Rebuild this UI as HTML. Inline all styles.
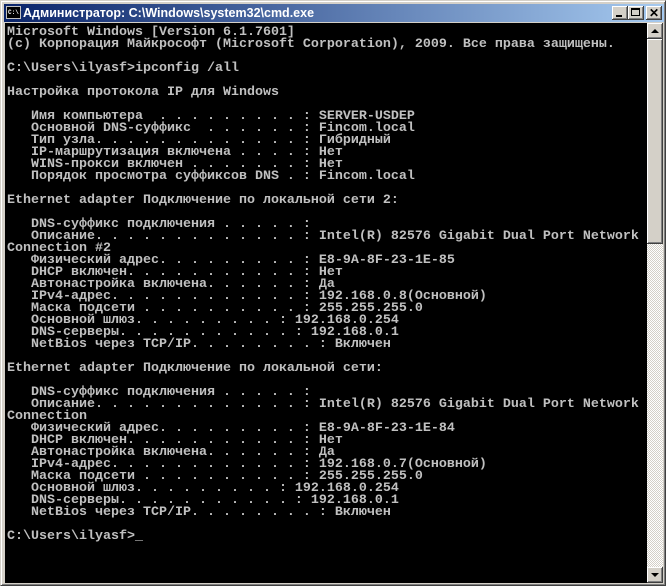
<!DOCTYPE html>
<html><head><meta charset="utf-8"><style>
*{margin:0;padding:0;box-sizing:border-box}
body{width:666px;height:586px;background:#d4d0c8;position:relative;overflow:hidden;font-family:"Liberation Sans",sans-serif}
.win{position:absolute;left:0;top:0;width:666px;height:586px;border-top:1px solid #d4d0c8;border-left:1px solid #d4d0c8;border-right:1px solid #404040;border-bottom:1px solid #404040;box-shadow:inset 1px 1px 0 #fff,inset -1px -1px 0 #808080}
.title{position:absolute;left:3px;top:3px;width:660px;height:18px;background:linear-gradient(90deg,#0a246a,#a6caf0)}
.title span{position:absolute;left:19px;top:2px;color:#fff;font-weight:bold;font-size:12.5px;white-space:nowrap}
.ico{position:absolute;left:2px;top:2px;width:15px;height:13px;background:#000;border:1px solid #c0c0c0;color:#fff;font:bold 6px "Liberation Mono",monospace;line-height:11px;padding-left:1px}
.btn{position:absolute;top:2px;width:16px;height:14px;background:#d4d0c8;box-shadow:inset -1px -1px 0 #404040,inset 1px 1px 0 #fff,inset -2px -2px 0 #808080}
.con{position:absolute;left:4px;top:22px;width:642px;height:560px;background:#000;overflow:hidden}
pre{position:absolute;left:2px;top:4px;color:#c0c0c0;font-family:"Liberation Mono","DejaVu Sans Mono",monospace;font-weight:bold;font-size:13.33px;line-height:12px;letter-spacing:0;white-space:pre}
.sb{position:absolute;left:646px;top:22px;width:16px;height:560px;background:repeating-conic-gradient(#fff 0 25%,#d4d0c8 0 50%) 0 0/2px 2px}
.sbb{position:absolute;left:0;width:16px;height:16px;background:#d4d0c8;box-shadow:inset -1px -1px 0 #404040,inset 1px 1px 0 #fff,inset -2px -2px 0 #808080}
</style></head><body>
<div class="win">
<div class="title"><div class="ico">C:\</div><span>Администратор: C:\Windows\system32\cmd.exe</span>
<div class="btn" style="left:608px"><div style="position:absolute;left:4px;top:9px;width:6px;height:2px;background:#000"></div></div>
<div class="btn" style="left:624px"><div style="position:absolute;left:3px;top:2px;width:9px;height:8px;border:1px solid #000;border-top-width:2px"></div></div>
<div class="btn" style="left:642px"><div style="position:absolute;left:3px;top:0px;font:bold 12px 'Liberation Sans',sans-serif;color:#000">✕</div></div>
</div>
<div class="con"><pre>Microsoft Windows [Version 6.1.7601]
(c) Корпорация Майкрософт (Microsoft Corporation), 2009. Все права защищены.

C:\Users\ilyasf>ipconfig /all

Настройка протокола IP для Windows

   Имя компьютера  . . . . . . . . . : SERVER-USDEP
   Основной DNS-суффикс  . . . . . . : Fincom.local
   Тип узла. . . . . . . . . . . . . : Гибридный
   IP-маршрутизация включена . . . . : Нет
   WINS-прокси включен . . . . . . . : Нет
   Порядок просмотра суффиксов DNS . : Fincom.local

Ethernet adapter Подключение по локальной сети 2:

   DNS-суффикс подключения . . . . . :
   Описание. . . . . . . . . . . . . : Intel(R) 82576 Gigabit Dual Port Network
Connection #2
   Физический адрес. . . . . . . . . : E8-9A-8F-23-1E-85
   DHCP включен. . . . . . . . . . . : Нет
   Автонастройка включена. . . . . . : Да
   IPv4-адрес. . . . . . . . . . . . : 192.168.0.8(Основной)
   Маска подсети . . . . . . . . . . : 255.255.255.0
   Основной шлюз. . . . . . . . . : 192.168.0.254
   DNS-серверы. . . . . . . . . . . : 192.168.0.1
   NetBios через TCP/IP. . . . . . . . : Включен

Ethernet adapter Подключение по локальной сети:

   DNS-суффикс подключения . . . . . :
   Описание. . . . . . . . . . . . . : Intel(R) 82576 Gigabit Dual Port Network
Connection
   Физический адрес. . . . . . . . . : E8-9A-8F-23-1E-84
   DHCP включен. . . . . . . . . . . : Нет
   Автонастройка включена. . . . . . : Да
   IPv4-адрес. . . . . . . . . . . . : 192.168.0.7(Основной)
   Маска подсети . . . . . . . . . . : 255.255.255.0
   Основной шлюз. . . . . . . . . : 192.168.0.254
   DNS-серверы. . . . . . . . . . . : 192.168.0.1
   NetBios через TCP/IP. . . . . . . . : Включен

C:\Users\ilyasf>_</pre></div>
<div class="sb">
<div class="sbb" style="top:0"><div style="position:absolute;left:4px;top:6px;width:0;height:0;border-left:4px solid transparent;border-right:4px solid transparent;border-bottom:4px solid #000"></div></div>
<div class="sbb" style="top:16px;height:205px"></div>
<div class="sbb" style="top:544px"><div style="position:absolute;left:4px;top:6px;width:0;height:0;border-left:4px solid transparent;border-right:4px solid transparent;border-top:4px solid #000"></div></div>
</div>
</div>
</body></html>
